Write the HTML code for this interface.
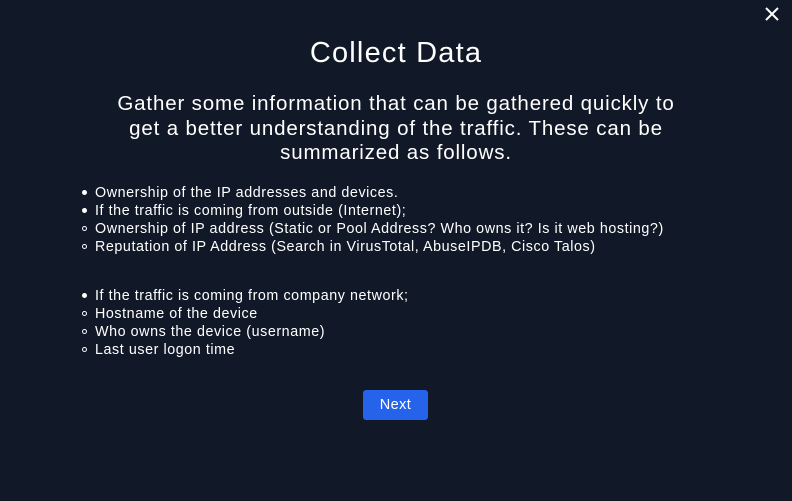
<!DOCTYPE html>
<html><head><style>
html,body{margin:0;padding:0;width:792px;height:501px;background:#111827;overflow:hidden;font-family:"Liberation Sans",sans-serif;color:#fff}
.t{position:absolute;left:0;width:792px;text-align:center}
h1{position:absolute;top:37px;left:0;width:792px;text-align:center;margin:0;font-weight:400;font-size:29px;letter-spacing:1.2px}
.p{top:92px;font-size:20.5px;line-height:24.5px;letter-spacing:0.85px}
.l{position:absolute;left:95px;font-size:14.3px;line-height:18px;letter-spacing:0.57px}
.l div{position:relative;white-space:nowrap}
.d:before{content:"";position:absolute;left:-13px;top:6px;width:5px;height:5px;border-radius:50%;background:#fff}
.c:before{content:"";position:absolute;left:-13px;top:6px;border-radius:50%;border:1px solid #fff;width:3px;height:3px}
.btn{position:absolute;left:363px;top:390px;width:65px;height:30px;background:#2563eb;border-radius:3px;font-size:14.5px;line-height:31px;text-align:center;letter-spacing:0.4px}
.x{position:absolute;left:764px;top:6px}
</style></head><body>
<svg class="x" width="16" height="16" viewBox="0 0 16 16"><path d="M2 2L14 14M14 2L2 14" stroke="#fff" stroke-width="2"/></svg>
<h1>Collect Data</h1>
<div class="t p">Gather some information that can be gathered quickly to<br>get a better understanding of the traffic. These can be<br>summarized as follows.</div>
<div class="l" style="top:184px">
<div class="d">Ownership of the IP addresses and devices.</div>
<div class="d">If the traffic is coming from outside (Internet);</div>
<div class="c">Ownership of IP address (Static or Pool Address? Who owns it? Is it web hosting?)</div>
<div class="c">Reputation of IP Address (Search in VirusTotal, AbuseIPDB, Cisco Talos)</div>
</div>
<div class="l" style="top:287px">
<div class="d">If the traffic is coming from company network;</div>
<div class="c">Hostname of the device</div>
<div class="c">Who owns the device (username)</div>
<div class="c">Last user logon time</div>
</div>
<div class="btn">Next</div>
</body></html>
